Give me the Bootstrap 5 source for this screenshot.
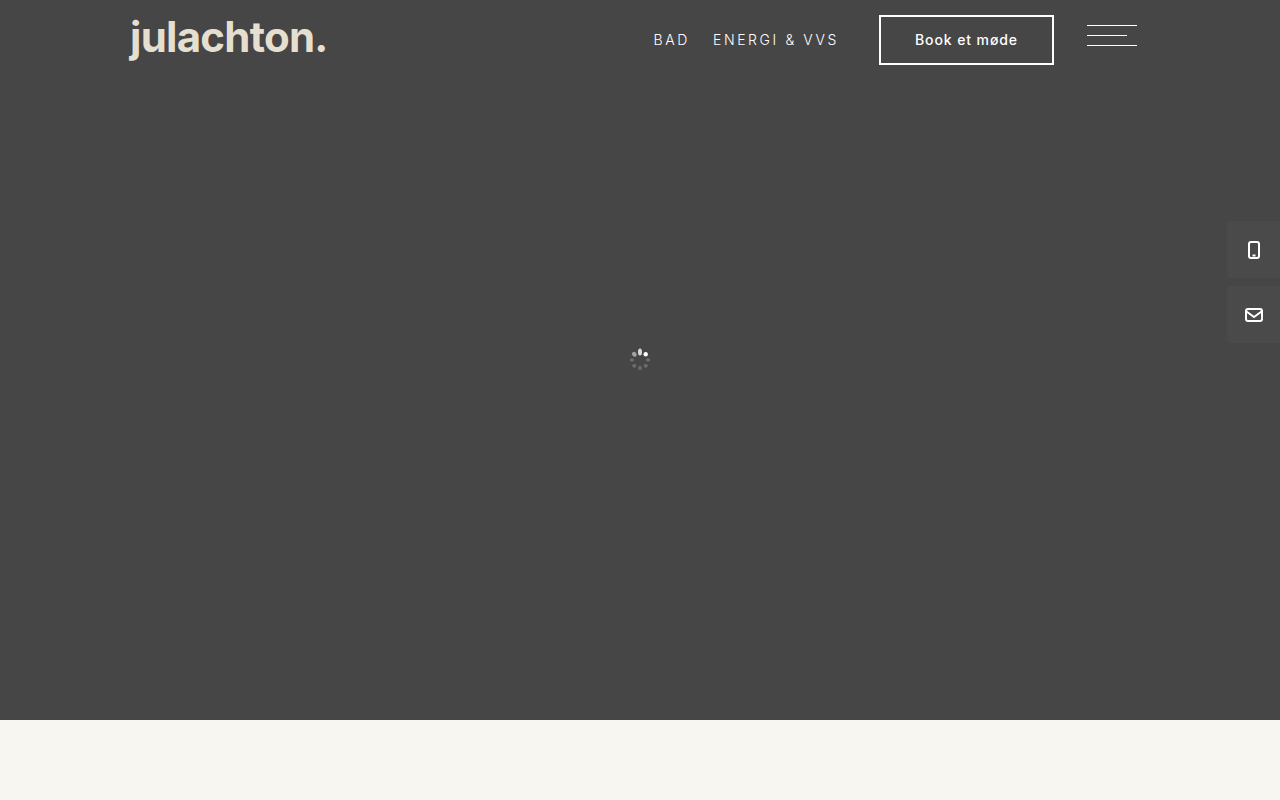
<!DOCTYPE html>
<html lang="da">
<head>
  <meta charset="utf-8">
  <title>Julachton</title>
  <link rel="stylesheet" href="https://cdn.jsdelivr.net/npm/bootstrap@5.3.0/dist/css/bootstrap.min.css">
  <style>
    body { background: #f8f6f1; font-family: "Inter", "Liberation Sans", sans-serif; }
    .hero-area { height: 720px; background: #464646; }
    .top-bar { padding: 15px 143px 0 130px; }
    .brand-name { color: #e5dfd0; font-size: 42px; font-weight: 700; line-height: 44px; padding-bottom: 6px; letter-spacing: -.75px; text-decoration: none; }
    .main-link { color: #fff; font-size: 14px; font-weight: 300; letter-spacing: 2.6px; padding-bottom: 2px; text-decoration: none; }
    .main-link:first-of-type { margin-right: 23px; }
    .book-btn { width: 175px; height: 50px; border: 2px solid #fff; border-radius: 0; color: #fff; font-size: 14px; font-weight: 500; letter-spacing: .9px; padding: 0 0 2px; margin-left: 40px; }
    .burger { width: 50px; margin-left: 33px; margin-bottom: 10px; gap: 9px; }
    .burger span { display: block; height: 1px; background: #fff; }
    .burger span:nth-child(2) { width: 40px; }
    .side-tabs { position: fixed; top: 221px; right: 0; gap: 8px; }
    .side-tab { width: 53px; height: 57px; background: #4a4a4a; border-radius: 4px 0 0 4px; color: #fff; }
  </style>
</head>
<body>

  <div class="hero-area position-relative d-flex align-items-center justify-content-center">

    <!-- header -->
    <nav class="top-bar position-absolute top-0 start-0 end-0 d-flex align-items-center">
      <a href="#" class="brand-name me-auto">julachton.</a>
      <div class="d-flex">
        <a href="#" class="main-link">BAD</a>
        <a href="#" class="main-link">ENERGI &amp; VVS</a>
      </div>
      <a href="#" class="btn book-btn d-flex align-items-center justify-content-center">Book et møde</a>
      <div class="burger d-flex flex-column">
        <span></span>
        <span></span>
        <span></span>
      </div>
    </nav>

    <!-- loader -->
    <svg width="24" height="24" viewBox="0 0 24 24" aria-hidden="true">
      <g fill="#fff">
        <ellipse cx="12" cy="4" rx="2" ry="3.5" opacity=".8"/>
        <ellipse cx="17.7" cy="6.3" rx="2.2" ry="2.2" opacity="1"/>
        <ellipse cx="20" cy="12" rx="2.2" ry="1.7" opacity=".2"/>
        <ellipse cx="17.7" cy="17.7" rx="2" ry="2" opacity=".2"/>
        <ellipse cx="12" cy="20" rx="1.8" ry="2.2" opacity=".2"/>
        <ellipse cx="6.3" cy="17.7" rx="2" ry="2" opacity=".2"/>
        <ellipse cx="4" cy="12" rx="2.2" ry="1.7" opacity=".2"/>
        <ellipse cx="6.3" cy="6.3" rx="2.6" ry="2.2" transform="rotate(45 6.3 6.3)" opacity=".5"/>
      </g>
    </svg>

    <!-- contact tabs -->
    <div class="side-tabs d-flex flex-column">
      <a href="#" class="side-tab d-flex align-items-center justify-content-center">
        <svg width="12" height="18" viewBox="0 0 12 18" fill="none" aria-hidden="true">
          <rect x="1" y="1" width="10" height="16" rx="2" stroke="#fff" stroke-width="2"/>
          <rect x="4.5" y="13.5" width="3" height="2" fill="#fff"/>
        </svg>
      </a>
      <a href="#" class="side-tab d-flex align-items-center justify-content-center">
        <svg width="18" height="14" viewBox="0 0 18 14" fill="none" aria-hidden="true">
          <rect x="1" y="1" width="16" height="12" rx="2" stroke="#fff" stroke-width="2"/>
          <path d="M1.5 3.5 9 9l7.5-5.5" stroke="#fff" stroke-width="2"/>
        </svg>
      </a>
    </div>
  </div>

  <script src="https://cdn.jsdelivr.net/npm/bootstrap@5.3.0/dist/js/bootstrap.bundle.min.js"></script>
</body>
</html>
